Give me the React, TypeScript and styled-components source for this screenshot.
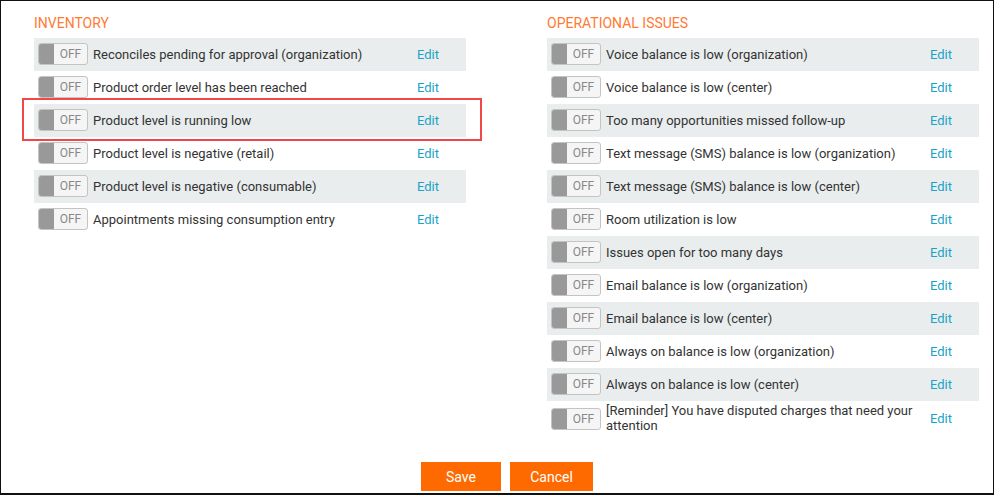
import React from "react";
import styled, { createGlobalStyle } from "styled-components";

const G = createGlobalStyle`
  body { margin: 0; font-family: Roboto, "Liberation Sans", sans-serif; }
  * { box-sizing: border-box; }
`;

const Frame = styled.div`
  width: 994px; height: 495px; border: 1px solid #111; border-bottom-width: 2px;
  padding: 13px 0 0 33px; display: flex; flex-direction: column;
`;
const Columns = styled.div`display: flex; gap: 81px;`;
const Col = styled.div`width: 432px; display: flex; flex-direction: column;`;
const Heading = styled.div`
  color: #ff7a33; font-size: 14px; text-transform: uppercase; height: 24px; line-height: 18px;
`;
const Row = styled.div<{ $alt: boolean; $hl?: boolean; $tall?: boolean }>`
  position: relative; display: flex; align-items: center; min-height: 33px;
  padding: ${p => (p.$tall ? "2px" : "0")} 0 ${p => (p.$tall ? "2px" : "0")} 4px;
  background: ${p => (p.$alt ? "#e9eded" : "transparent")};
  ${p => p.$hl && `&::after { content: ""; position: absolute; left: -12px; right: -16px; top: -6px; bottom: -4px; border: 2px solid #f24649; }`}
`;
const Toggle = styled.div`
  width: 50px; height: 22px; border: 1px solid #c4c4c4; border-radius: 3px; display: flex;
  overflow: hidden; flex-shrink: 0; background: #f5f5f5; align-self: flex-start; margin-top: 5px;
`;
const Knob = styled.div`width: 15px; background: #999;`;
const Off = styled.div`flex: 1; display: flex; align-items: center; justify-content: center; font-size: 12px; color: #888;`;
const Label = styled.div`flex: 1; margin-left: 5px; font-size: 13px; color: #333; line-height: 15px; padding-right: 10px;`;
const Edit = styled.a`width: 49px; font-size: 13px; color: #1aa3c8; flex-shrink: 0;`;
const Buttons = styled.div`display: flex; justify-content: center; gap: 9px; margin-top: 27px; padding-right: 13px;`;
const Btn = styled.button<{ $w: number }>`
  width: ${p => p.$w}px; height: 29px; border: none; background: #ff6a00; color: #fff;
  font-family: Roboto, "Liberation Sans", sans-serif; font-size: 14px;
`;

const inv = [
  "Reconciles pending for approval (organization)",
  "Product order level has been reached",
  "Product level is running low",
  "Product level is negative (retail)",
  "Product level is negative (consumable)",
  "Appointments missing consumption entry",
];
const ops = [
  "Voice balance is low (organization)",
  "Voice balance is low (center)",
  "Too many opportunities missed follow-up",
  "Text message (SMS) balance is low (organization)",
  "Text message (SMS) balance is low (center)",
  "Room utilization is low",
  "Issues open for too many days",
  "Email balance is low (organization)",
  "Email balance is low (center)",
  "Always on balance is low (organization)",
  "Always on balance is low (center)",
  "[Reminder] You have disputed charges that need your attention",
];

const List = ({ items, hl }: { items: string[]; hl?: number }) => (
  <>
    {items.map((t, i) => {
      const tall = t.length > 55;
      return (
        <Row key={t} $alt={i % 2 === 0} $hl={i === hl} $tall={tall}>
          <Toggle><Knob /><Off>OFF</Off></Toggle>
          <Label>{t}</Label>
          <Edit>Edit</Edit>
        </Row>
      );
    })}
  </>
);

export default function App() {
  return (
    <Frame>
      <G />
      <Columns>
        <Col><Heading>Inventory</Heading><List items={inv} hl={2} /></Col>
        <Col><Heading>Operational Issues</Heading><List items={ops} /></Col>
      </Columns>
      <Buttons><Btn $w={80}>Save</Btn><Btn $w={83}>Cancel</Btn></Buttons>
    </Frame>
  );
}
